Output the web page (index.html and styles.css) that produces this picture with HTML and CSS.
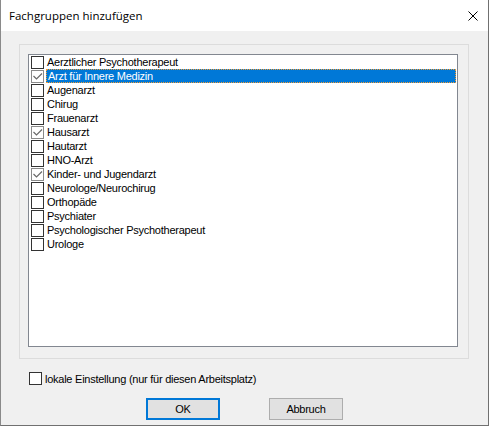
FILE: index.html
```html
<!DOCTYPE html>
<html lang="de">
<head>
  <meta charset="UTF-8">
  <title>Fachgruppen hinzufügen</title>
  <link rel="stylesheet" href="styles.css">
</head>
<body>

  <div class="dialog">
    <!-- Title bar -->
    <div class="title-bar">
      <span class="title">Fachgruppen hinzufügen</span>
      <svg class="close" width="10" height="10" viewBox="0 0 10 10">
        <path d="M0.5 0.5 L9.5 9.5 M9.5 0.5 L0.5 9.5" stroke="#000" stroke-width="1" fill="none"/>
      </svg>
    </div>

    <div class="dialog-body">
      <div class="group-box">
        <div class="list-box" id="listBox"></div>
      </div>

      <label class="option">
        <span class="box"></span>
        <span>lokale Einstellung (nur für diesen Arbeitsplatz)</span>
      </label>

      <div class="buttons">
        <button class="btn btn-default">OK</button>
        <button class="btn">Abbruch</button>
      </div>
    </div>
  </div>

  <script>
    // Fachgruppen list
    const groups = [
      { name: 'Aerztlicher Psychotherapeut', checked: false },
      { name: 'Arzt für Innere Medizin', checked: true, selected: true },
      { name: 'Augenarzt', checked: false },
      { name: 'Chirug', checked: false },
      { name: 'Frauenarzt', checked: false },
      { name: 'Hausarzt', checked: true },
      { name: 'Hautarzt', checked: false },
      { name: 'HNO-Arzt', checked: false },
      { name: 'Kinder- und Jugendarzt', checked: true },
      { name: 'Neurologe/Neurochirug', checked: false },
      { name: 'Orthopäde', checked: false },
      { name: 'Psychiater', checked: false },
      { name: 'Psychologischer Psychotherapeut', checked: false },
      { name: 'Urologe', checked: false }
    ];

    const tick = '<svg width="11" height="11" viewBox="0 0 11 11"><path d="M1.5 5 L4.5 8 L10 2.5" stroke="#6a6a6a" stroke-width="1.2" fill="none"/></svg>';

    const listBox = document.getElementById('listBox');
    groups.forEach(item => {
      const row = document.createElement('div');
      row.classList.add('list-item');
      if (item.selected) row.classList.add('selected');
      row.innerHTML = `
        <span class="box ${item.checked ? 'checked' : ''}">${item.checked ? tick : ''}</span>
        <span class="item-text">${item.name}</span>
      `;
      listBox.appendChild(row);
    });
  </script>

</body>
</html>
```

FILE: styles.css
```css
body {
  margin: 0;
  background-color: #fff;
  font-family: "Liberation Sans", Arial, sans-serif;
  font-size: 11px;
  letter-spacing: -0.25px;
  color: #000;
}

.dialog {
  width: 489px;
  height: 426px;
  background-color: #f0f0f0;
  border-right: 1px solid #707070;
  border-bottom: 1px solid #707070;
  border-left: 1px solid #8a8a8a;
  box-sizing: border-box;
}

/* Title bar */
.title-bar {
  height: 31px;
  background-color: #fff;
  display: flex;
  align-items: center;
  justify-content: space-between;
  padding: 0 10px 0 8px;
}

.title {
  font-family: "Open Sans", "Noto Sans", sans-serif;
  font-size: 11.5px;
  letter-spacing: 0;
  color: #000;
}

.close {
  display: block;
}

/* Body */
.dialog-body {
  padding: 13px 0 0 18px;
}

.group-box {
  width: 450px;
  height: 315px;
  border: 1px solid #dcdcdc;
  box-sizing: border-box;
  padding: 9px 0 0 8px;
}

.list-box {
  width: 430px;
  height: 293px;
  border: 1px solid #828790;
  background-color: #fff;
  box-sizing: border-box;
  padding: 0 1px 0 2px;
}

.list-item {
  display: flex;
  align-items: center;
  height: 14px;
}

.box {
  width: 13px;
  height: 13px;
  border: 1px solid #333;
  background-color: #fff;
  box-sizing: border-box;
  display: flex;
  align-items: center;
  justify-content: center;
  flex-shrink: 0;
}

.box.checked {
  border-color: #8a8a8a;
}

.item-text {
  margin-left: 2px;
  padding: 0 1px;
  line-height: 14px;
  height: 14px;
  box-sizing: border-box;
  white-space: nowrap;
}

.list-item.selected .item-text {
  flex: 1;
  background-color: #0078d7;
  color: #fff;
  border: 1px dotted #f39c33;
  line-height: 12px;
}

/* Local setting option */
.option {
  display: flex;
  align-items: center;
  gap: 3px;
  margin: 13px 0 0 10px;
  height: 13px;
}

/* Buttons */
.buttons {
  display: flex;
  justify-content: center;
  gap: 49px;
  margin: 13px 0 0 -18px;
}

.btn {
  width: 74px;
  height: 22px;
  background-color: #e1e1e1;
  border: 1px solid #adadad;
  font-family: "Liberation Sans", Arial, sans-serif;
  font-size: 11px;
  font-weight: normal;
  letter-spacing: -0.25px;
  color: #000;
  padding: 0;
}

.btn-default {
  border: 2px solid #0078d7;
}
```
